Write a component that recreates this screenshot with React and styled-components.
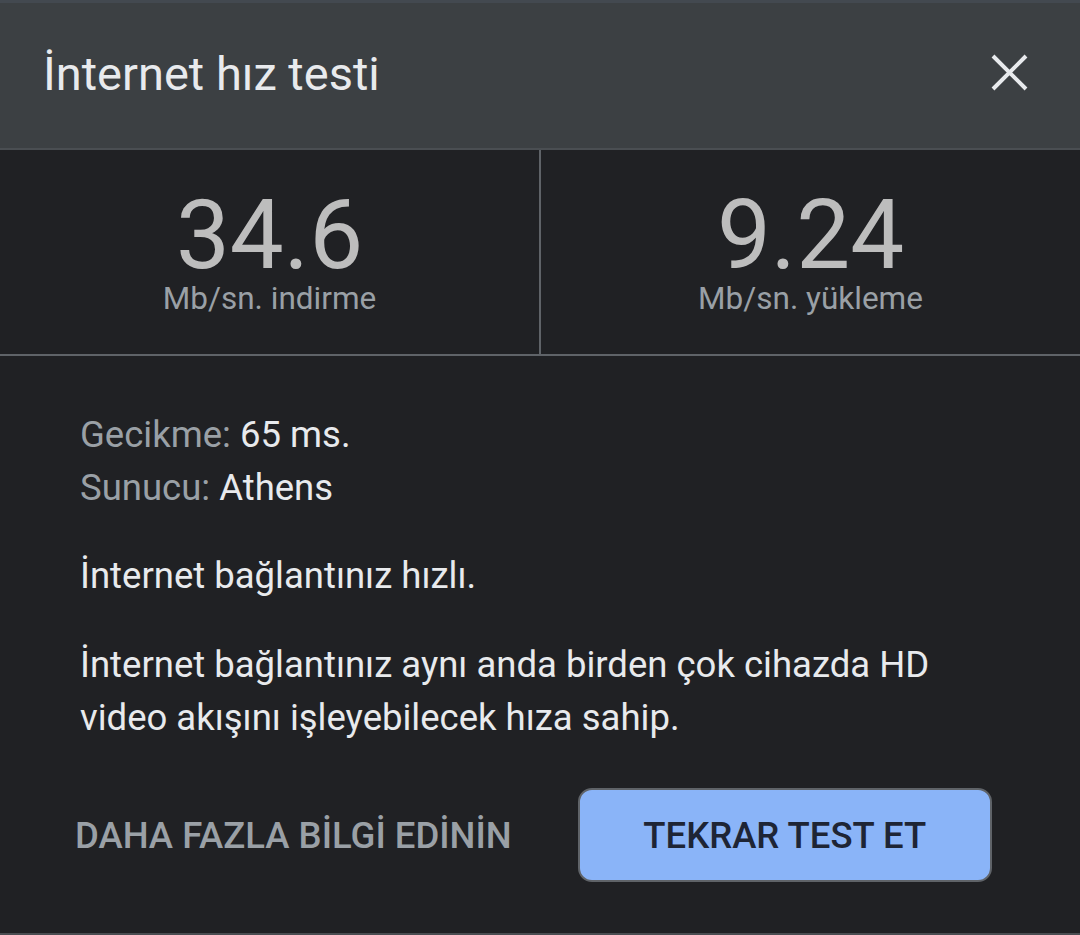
import styled, { createGlobalStyle } from "styled-components"

const Global = createGlobalStyle`
body {
    margin: 0;
    background: #202124;
    font-family: Roboto, "Noto Sans", sans-serif;
}
`

const Dialog = styled.div`
width: 1080px;
height: 935px;
box-sizing: border-box;
background: #202124;
border-bottom: 2px solid #4a4d51;
display: flex;
flex-direction: column;
`

const Header = styled.div`
height: 150px;
flex-shrink: 0;
box-sizing: border-box;
border-top: 3px solid #434950;
border-bottom: 2px solid #4a4e52;
background: #3c4043;
display: flex;
align-items: center;
justify-content: space-between;
padding: 0 52px 4px 43px;
`

const Title = styled.h1`
margin: 0;
font-size: 47px;
font-weight: 400;
color: #e8eaed;
`

const Close = styled.button`
border: none;
background: none;
padding: 0;
margin-bottom: 3px;
width: 37px;
height: 37px;
display: flex;
align-items: center;
justify-content: center;
cursor: pointer;
`

const Stats = styled.div`
display: grid;
grid-template-columns: 539px 1fr;
height: 206px;
flex-shrink: 0;
box-sizing: border-box;
border-bottom: 2px solid #5f6368;
`

const Stat = styled.div`
display: flex;
flex-direction: column;
align-items: center;
padding-top: 40px;
border-left: ${p => p.divider ? "2px solid #5f6368" : "none"};
`

const Value = styled.div`
font-size: 96px;
line-height: 90px;
color: #bdbdbd;
`

const Unit = styled.div`
font-size: 31.5px;
line-height: 34px;
color: #9aa0a6;
margin-top: 2px;
`

const Body = styled.div`
padding: 52px 80px 0 80px;
`

const InfoLine = styled.div`
font-size: 36.5px;
line-height: 53px;
color: #e8eaed;
`

const Label = styled.span`
color: #9aa0a6;
`

const Para = styled.p`
margin: ${p => p.first ? "35px" : "36px"} 0 0 0;
font-size: 36.5px;
line-height: 53px;
color: #e8eaed;
`

const Actions = styled.div`
display: flex;
align-items: center;
padding: 44px 0 0 75px;
gap: 66px;
`

const TextButton = styled.button`
border: none;
background: none;
padding: 0;
font-family: Roboto, sans-serif;
font-size: 36.5px;
font-weight: 500;
color: #9aa0a6;
cursor: pointer;
`

const FilledButton = styled.button`
width: 414px;
height: 94px;
border: 2px solid #5f6368;
border-radius: 14px;
background: #8ab4f8;
font-family: Roboto, sans-serif;
font-size: 36.5px;
font-weight: 500;
color: #1e2535;
cursor: pointer;
`

const CloseIcon = () => (
    <svg width="37" height="37" viewBox="0 0 37 37">
        <path d="M2 2 L35 35 M35 2 L2 35" stroke="#e8eaed" strokeWidth="4" />
    </svg>
)

const App = () => {
    return (
        <>
            <Global />
            <Dialog>
                <Header>
                    <Title>İnternet hız testi</Title>
                    <Close><CloseIcon /></Close>
                </Header>
                <Stats>
                    <Stat>
                        <Value>34.6</Value>
                        <Unit>Mb/sn. indirme</Unit>
                    </Stat>
                    <Stat divider>
                        <Value>9.24</Value>
                        <Unit>Mb/sn. yükleme</Unit>
                    </Stat>
                </Stats>
                <Body>
                    <InfoLine><Label>Gecikme:</Label> 65 ms.</InfoLine>
                    <InfoLine><Label>Sunucu:</Label> Athens</InfoLine>
                    <Para first>İnternet bağlantınız hızlı.</Para>
                    <Para>İnternet bağlantınız aynı anda birden çok cihazda HD video akışını işleyebilecek hıza sahip.</Para>
                </Body>
                <Actions>
                    <TextButton>DAHA FAZLA BİLGİ EDİNİN</TextButton>
                    <FilledButton>TEKRAR TEST ET</FilledButton>
                </Actions>
            </Dialog>
        </>
    )
}

export default App
